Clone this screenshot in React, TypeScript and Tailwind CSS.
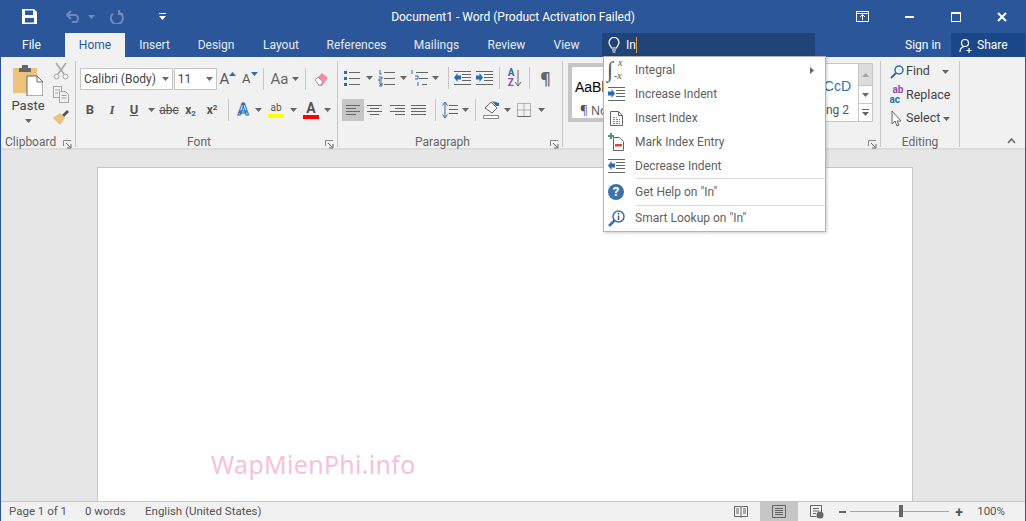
import React from 'react';

const Caret = ({ color = '#666', className = '' }: { color?: string; className?: string }) => (
  <svg width="7" height="4" viewBox="0 0 7 4" className={className}><path d="M0 0h7L3.500 4z" fill={color} /></svg>
);

// fixed width slot with a centered child, ribbon buttons are all like this
const Cell = ({ w, children, active }: { w: string; children?: React.ReactNode; active?: boolean }) => (
  <div className={`${w} h-[22px] shrink-0 flex items-center justify-center ${active ? 'bg-[#c6c6c6]' : ''}`}>{children}</div>
);

const Sep = ({ className = '' }: { className?: string }) => <div className={`w-px h-[22px] shrink-0 bg-[#c6c6c6] ${className}`} />;

const Launcher = () => (
  <svg width="9" height="9" viewBox="0 0 9 9" fill="none">
    <path d="M.5 6V.5H8" stroke="#8a8a8a" />
    <path d="M3 3l4.500 4.500M8 4v4H4" stroke="#666" />
  </svg>
);

const Lines = ({ d }: { d: string }) => (
  <svg width="18" height="16" viewBox="0 0 18 16" fill="none"><path d={d} stroke="#666" /></svg>
);

const Bullets = () => (
  <svg width="18" height="16" viewBox="0 0 18 16" fill="none">
    <path d="M6 2.500h11M6 8.500h11M6 14.500h11" stroke="#666" />
    <path d="M1 1h3v3H1zM1 7h3v3H1zM1 13h3v3H1z" fill="#2b6cb0" />
  </svg>
);

const Numbered = () => (
  <svg width="18" height="18" viewBox="0 0 18 18" fill="none">
    <path d="M6 3.500h11M6 9.500h11M6 15.500h11" stroke="#666" />
    <path d="M2 1v4M1.500 5h2M1 8h3v2H1v2h3M1 14h3v3H1M2 15.500h2" stroke="#2b6cb0" />
  </svg>
);

const Multi = () => (
  <svg width="18" height="18" viewBox="0 0 18 18" fill="none">
    <path d="M5 3.500h12M8 9.500h9M11 15.500h5" stroke="#666" />
    <path d="M1 1v4M4 7h3v3H4M7 13v4" stroke="#2b6cb0" />
  </svg>
);

const Indent = ({ out }: { out?: boolean }) => (
  <svg width="17" height="14" viewBox="0 0 17 14" fill="none">
    <path d="M0 .5h17M8 3.500h9M8 6.500h9M8 9.500h9M0 13.500h17" stroke="#666" />
    {out
      ? <path d="M7 4.500v4H3.500V11L0 6.500 3.500 2v2.500z" fill="#2b6cb0" />
      : <path d="M0 4.500v4h3.500V11L7 6.500 3.500 2v2.500z" fill="#2b6cb0" />}
  </svg>
);

const Group = ({ w, label, launcher, children, leftLabel }: { w: string; label?: string; launcher?: boolean; children: React.ReactNode; leftLabel?: boolean }) => (
  <div className={`${w} shrink-0 h-[86px] flex flex-col border-r border-[#c6c6c6]`}>
    <div className="flex-1 min-h-0">{children}</div>
    <div className={`h-[11px] flex items-center relative text-[12px] text-[#666] ${leftLabel ? 'pl-1' : 'justify-center'} ${launcher && !leftLabel ? 'pr-[15px]' : ''}`}>
      {label}
      {launcher && <span className="absolute right-[3px] top-[4px] flex"><Launcher /></span>}
    </div>
  </div>
);

const ClipboardGroup = () => (
  <Group w="w-[75px]" label="Clipboard" launcher leftLabel>
    <div className="flex">
      <div className="w-[52px] flex flex-col items-center pt-[3px] pl-[2px]">
        <svg width="30" height="32" viewBox="0 0 30 32">
          <path d="M0 4h24v25H0z" fill="#edc27c" />
          <path d="M6 4h12v4H6zM9 1h6v3H9z" fill="#666" />
          <path d="M14 12h10l6 6v14H14z" fill="#fff" stroke="#666" />
          <path d="M24 12v6h6" fill="none" stroke="#666" />
        </svg>
        <span className="text-[13px] text-[#444] mt-[1px] leading-[18px]">Paste</span>
        <Caret className="mt-[4px]" />
      </div>
      <div className="w-[16px] flex flex-col items-center gap-[6px] pt-[1px]">
        <svg width="16" height="18" viewBox="0 0 16 18" fill="none" stroke="#a6a6a6">
          <path d="M3 1l8 11M13 1L5 12" strokeWidth="1.500" />
          <circle cx="3.500" cy="14.500" r="2.500" /><circle cx="12.500" cy="14.500" r="2.500" />
        </svg>
        <svg width="16" height="17" viewBox="0 0 16 17" fill="#f1f1f1" stroke="#a6a6a6">
          <path d="M.5.500h8v11h-8z" /><path d="M6.500 5.500h6l3 3v8h-9z" /><path d="M8.500 9.500h5M8.500 12h5M2 4h5M2 7h3" />
        </svg>
        <svg width="16" height="16" viewBox="0 0 16 16">
          <path d="M9 6l5-5 2 2-5 5z" fill="#555" />
          <path d="M7 4l5 5-5 7-7-7z" fill="#edc27c" />
        </svg>
      </div>
    </div>
  </Group>
);

const FontBox = ({ w, text }: { w: string; text: string }) => (
  <div className={`${w} shrink-0 h-[22px] bg-white border border-[#c6c6c6] flex items-center justify-between pl-[3px] pr-[3px] text-[12px] text-[#444]`}>
    <span>{text}</span><Caret />
  </div>
);

const FontGroup = () => (
  <Group w="w-[262px]" label="Font" launcher>
    <div className="pt-[7px] pl-[4px]">
      <div className="flex items-center h-[22px]">
        <FontBox w="w-[93px]" text="Calibri (Body)" />
        <div className="w-px" />
        <FontBox w="w-[43px]" text="11" />
        <Cell w="w-[22px]"><span className="text-[15px] text-[#555]">A</span><Caret color="#2b6cb0" className="mb-[10px] rotate-180" /></Cell>
        <Cell w="w-[22px]"><span className="text-[13px] text-[#555]">A</span><Caret color="#2b6cb0" className="mb-[10px]" /></Cell>
        <div className="w-[3px]" />
        <Sep />
        <div className="w-[4px]" />
        <Cell w="w-[24px]"><span className="text-[15px] text-[#666]">Aa</span></Cell>
        <Cell w="w-[8px]"><Caret /></Cell>
        <div className="w-[7px]" />
        <Sep />
        <Cell w="w-[31px]">
          <svg width="16" height="16" viewBox="0 0 16 16"><path d="M1 9l7-7 6 5-6 8H5z" fill="#ef8ea0" /><path d="M1 9l3-3 5 5-2 3H5z" fill="#fff" stroke="#888" strokeWidth=".7" /></svg>
        </Cell>
      </div>
      <div className="flex items-center h-[22px] mt-[9px] -ml-[1px]">
        <Cell w="w-[22px]"><b className="text-[13px] text-[#555]">B</b></Cell>
        <Cell w="w-[22px]"><i className="text-[13px] text-[#555] font-['Liberation_Serif',serif] font-bold">I</i></Cell>
        <Cell w="w-[22px]"><b className="text-[13px] text-[#555] underline">U</b></Cell>
        <Cell w="w-[12px]"><Caret /></Cell>
        <div className="w-px" />
        <Cell w="w-[22px]"><span className="text-[12px] text-[#555] line-through">abc</span></Cell>
        <Cell w="w-[21px]"><b className="text-[12px] text-[#555]">x<sub className="text-[8px] text-[#2b6cb0]">2</sub></b></Cell>
        <Cell w="w-[22px]"><b className="text-[12px] text-[#555]">x<sup className="text-[8px] text-[#555]">2</sup></b></Cell>
        <div className="w-[5px]" />
        <Sep />
        <div className="w-[3px]" />
        <Cell w="w-[22px]"><span className="text-[16px] font-bold text-white [-webkit-text-stroke:1px_#2b6cb0]">A</span></Cell>
        <Cell w="w-[8px]"><Caret /></Cell>
        <div className="w-[3px]" />
        <Cell w="w-[22px]">
          <div className="flex flex-col items-center">
            <span className="text-[10px] leading-[12px] text-[#555]">ab</span>
            <div className="w-[16px] h-[4px] bg-[#ffff00]" />
          </div>
        </Cell>
        <Cell w="w-[12px]"><Caret /></Cell>
        <div className="w-px" />
        <Cell w="w-[22px]">
          <div className="flex flex-col items-center">
            <span className="text-[14px] leading-[13px] font-bold text-[#555]">A</span>
            <div className="w-[16px] h-[4px] bg-[#ff0000]" />
          </div>
        </Cell>
        <Cell w="w-[10px]"><Caret /></Cell>
      </div>
    </div>
  </Group>
);

const ParagraphGroup = () => (
  <Group w="w-[225px]" label="Paragraph" launcher>
    <div className="pt-[6px] pl-[3px]">
      <div className="flex items-center h-[22px]">
        <Cell w="w-[22px]"><Bullets /></Cell>
        <Cell w="w-[12px]"><Caret /></Cell>
        <div className="w-px" />
        <Cell w="w-[22px]"><Numbered /></Cell>
        <Cell w="w-[11px]"><Caret /></Cell>
        <Cell w="w-[21px]"><Multi /></Cell>
        <Cell w="w-[10px]"><Caret /></Cell>
        <div className="w-[8px]" />
        <Sep />
        <div className="w-[2px]" />
        <Cell w="w-[22px]"><Indent out /></Cell>
        <Cell w="w-[23px]"><Indent /></Cell>
        <div className="w-[3px]" />
        <Sep />
        <div className="w-[4px]" />
        <Cell w="w-[22px]">
          <div className="flex items-center">
            <div className="flex flex-col text-[10px] leading-[10px] font-bold">
              <span className="text-[#2b6cb0]">A</span><span className="text-[#8e4db5]">Z</span>
            </div>
            <svg width="8" height="17" viewBox="0 0 8 17" fill="none"><path d="M4 0v16M1 12l3 4 3-4" stroke="#666" /></svg>
          </div>
        </Cell>
        <div className="w-[3px]" />
        <Sep />
        <Cell w="w-[31px]"><span className="text-[16px] font-bold text-[#666] font-['Noto_Sans',sans-serif]">¶</span></Cell>
      </div>
      <div className="flex items-center h-[23px] mt-[9px] pl-px">
        <Cell w="w-[22px]" active><Lines d="M2 3.500h14M2 6.500h10M2 9.500h14M2 12.500h10" /></Cell>
        <Cell w="w-[22px]"><Lines d="M1 3.500h15M4 6.500h9M1 9.500h15M4 12.500h9" /></Cell>
        <Cell w="w-[22px]"><Lines d="M2 3.500h15M7 6.500h10M2 9.500h15M7 12.500h10" /></Cell>
        <Cell w="w-[22px]"><Lines d="M1 3.500h15M1 6.500h15M1 9.500h15M1 12.500h15" /></Cell>
        <div className="w-[5px]" />
        <Sep />
        <div className="w-[3px]" />
        <Cell w="w-[22px]">
          <svg width="16" height="18" viewBox="0 0 16 18" fill="none">
            <path d="M7 4.500h9M7 8.500h9M7 12.500h9" stroke="#666" />
            <path d="M3 2v14M.5 4.500L3 1l2.500 3.500M.5 13.500L3 17l2.500-3.500" stroke="#2b6cb0" />
          </svg>
        </Cell>
        <Cell w="w-[9px]"><Caret /></Cell>
        <div className="w-[5px]" />
        <Sep />
        <div className="w-[4px]" />
        <Cell w="w-[22px]">
          <svg width="17" height="19" viewBox="0 0 17 19" fill="none">
            <path d="M2 8l6-6 6 6-5 5z" fill="#fff" stroke="#666" />
            <path d="M9 1l4 5h3V3z" fill="#2b6cb0" />
            <path d="M.5 15.500h15v3H.5z" fill="#fff" stroke="#888" />
          </svg>
        </Cell>
        <Cell w="w-[10px]"><Caret /></Cell>
        <div className="w-px" />
        <Cell w="w-[22px]">
          <svg width="14" height="14" viewBox="0 0 14 14" fill="none">
            <path d="M.5.500h13v13H.5zM7 .5v13M.5 7h13" stroke="#777" strokeDasharray="1 1" />
            <path d="M.5 13.500h13" stroke="#666" />
          </svg>
        </Cell>
        <Cell w="w-[12px]"><Caret /></Cell>
      </div>
    </div>
  </Group>
);

const StylesGroup = () => (
  <Group w="w-[318px]" launcher>
    <div className="pt-[2px] pl-[5px]">
      <div className="w-[305px] h-[59px] flex border border-[#c6c6c6] bg-white">
        <div className="w-[60px] shrink-0 border-[4px] border-[#c6c6c6] -m-px pl-[3px] text-black">
          <div className="text-[14px] leading-[20px] mt-[10px] font-['Liberation_Sans',sans-serif]">AaBb</div>
          <div className="text-[12px] text-[#555] mt-[5px] pl-[5px] font-['Noto_Sans',sans-serif]">¶ No</div>
        </div>
        <div className="flex-1 flex flex-col items-end pr-[7px] overflow-hidden">
          <div className="text-[14px] leading-[20px] mt-[12px] text-[#2e74b5] whitespace-nowrap font-['Liberation_Sans',sans-serif]">bCcD</div>
          <div className="text-[12px] text-[#555] mt-[5px] whitespace-nowrap pr-[2px]">Heading 2</div>
        </div>
        <div className="w-[14px] shrink-0 flex flex-col border-l border-[#c6c6c6]">
          <div className="h-[21px] bg-[#dcdcdc] flex items-center justify-center"><Caret color="#a6a6a6" className="rotate-180" /></div>
          <div className="h-[19px] border-y border-[#c6c6c6] flex items-center justify-center"><Caret /></div>
          <div className="flex-1 flex flex-col items-center justify-center gap-[2px]">
            <div className="w-[7px] h-px bg-[#666]" /><Caret />
          </div>
        </div>
      </div>
    </div>
  </Group>
);

const EditRow = ({ icon, text, caret }: { icon: React.ReactNode; text: string; caret?: string }) => (
  <div className="h-[23.500px] flex items-center text-[12.500px] text-[#444]">
    <div className="w-[19px] flex justify-center">{icon}</div>
    <span>{text}</span>
    {caret && <Caret className={caret} />}
  </div>
);

const EditingGroup = () => (
  <Group w="w-[79px]" label="Editing">
    <div className="pl-[6px] -mt-[1px]">
      <EditRow
        text="Find"
        caret="ml-[12px]"
        icon={<svg width="14" height="14" viewBox="0 0 14 14" fill="none"><circle cx="9" cy="5" r="4" stroke="#2b6cb0" strokeWidth="1.500" /><path d="M6 8l-5 5" stroke="#2b6cb0" strokeWidth="2" /></svg>}
      />
      <EditRow
        text="Replace"
        icon={<div className="flex flex-col text-[10px] leading-[10px] font-bold"><span className="text-[#8e4db5] pl-[3px]">ab</span><span className="text-[#2b6cb0]">ac</span></div>}
      />
      <EditRow
        text="Select"
        caret="ml-[3px]"
        icon={<svg width="11" height="17" viewBox="0 0 11 17" fill="#fff" stroke="#666"><path d="M1 1v13l3-3 2 5 2-1-2-4h4z" /></svg>}
      />
    </div>
  </Group>
);

const MenuIcon = ({ children }: { children: React.ReactNode }) => <div className="w-[31px] flex justify-center pl-[1px] pr-[8px] shrink-0">{children}</div>;

const MenuRow = ({ icon, text, h = 'h-[24px]', arrow }: { icon: React.ReactNode; text: string; h?: string; arrow?: boolean }) => (
  <div className={`${h} flex items-center text-[12px] text-[#5f5f5f]`}>
    <MenuIcon>{icon}</MenuIcon>
    <span>{text}</span>
    {arrow && (
      <svg width="4" height="7" viewBox="0 0 4 7" className="ml-auto mr-[11px]"><path d="M0 0l4 3.500L0 7z" fill="#666" /></svg>
    )}
  </div>
);

const TellMeMenu = () => (
  <div className="absolute left-[602px] top-[56px] w-[223px] h-[176px] bg-white border border-[#b4b4b4] shadow-[1px_1px_3px_rgba(0,0,0,0.2)] pt-[1px]">
    <MenuRow
      text="Integral"
      arrow
      icon={
        <div className="relative w-[16px] h-[20px] text-[#555] font-['Liberation_Serif',serif] italic">
          <span className="absolute left-[-1px] top-[-1px] text-[22px] leading-[22px]">∫</span>
          <span className="absolute left-[10px] top-[-2px] text-[10px] leading-[10px]">x</span>
          <span className="absolute left-[6px] top-[11px] text-[10px] leading-[10px]">-x</span>
        </div>
      }
    />
    <MenuRow text="Increase Indent" icon={<Indent />} />
    <MenuRow
      text="Insert Index"
      icon={
        <svg width="13" height="15" viewBox="0 0 13 15" fill="none" stroke="#666"><path d="M.5.500h8l4 4v10H.5zM8.500.500v4h4" /><path d="M3 6.500h4M3 8.500h7M3 10.500h7M3 12.500h7" strokeDasharray="2 1" stroke="#888" /></svg>
      }
    />
    <MenuRow
      text="Mark Index Entry"
      icon={
        <svg width="16" height="18" viewBox="0 0 16 18" fill="none">
          <path d="M5.500 4.500h6l4 4v9h-10z" stroke="#666" />
          <path d="M2 0h2v2h2v2H4v2H2V4H0V2h2z" fill="#4a9a6c" />
          <path d="M7 11h7v2.500H7z" fill="#d0503c" />
        </svg>
      }
    />
    <MenuRow text="Decrease Indent" icon={<Indent out />} />
    <div className="h-px ml-[32px] bg-[#dcdcdc]" />
    <MenuRow
      text={'Get Help on "In"'}
      h="h-[25.500px]"
      icon={
        <div className="w-[16px] h-[16px] rounded-full bg-[#3d73a8] text-white text-[13px] font-bold leading-[16px] text-center">?</div>
      }
    />
    <div className="h-px ml-[32px] bg-[#dcdcdc]" />
    <MenuRow
      text={'Smart Lookup on "In"'}
      h="h-[25px]"
      icon={
        <svg width="17" height="17" viewBox="0 0 17 17" fill="none">
          <circle cx="10.500" cy="6.500" r="5.500" stroke="#3d73a8" strokeWidth="1.500" />
          <path d="M6.500 10.500L1 16" stroke="#3d73a8" strokeWidth="2.500" />
          <path d="M10.500 3v1.500M10.500 5.500V10" stroke="#555" strokeWidth="1.500" />
        </svg>
      }
    />
  </div>
);

const tabs = [
  ['Insert', 'w-[57px]'],
  ['Design', 'w-[66px]'],
  ['Layout', 'w-[64px]'],
  ['References', 'w-[87px]'],
  ['Mailings', 'w-[73px]'],
  ['Review', 'w-[67px]'],
  ['View', 'w-[53px]'],
];

const TitleBar = () => (
  <div className="h-[33px] shrink-0 grid grid-cols-[1fr_auto_1fr] items-center text-white">
    <div className="flex items-center pl-[21px]">
      <svg width="15" height="15" viewBox="0 0 15 15">
        <path fillRule="evenodd" d="M0 0h12l3 3v12H0zM3 1.500V6h8V1.500zM3 9v4.500h9V9z" fill="#fff" />
      </svg>
      <svg width="15" height="13" viewBox="0 0 15 13" fill="none" className="ml-[29px]">
        <path d="M1 5h9a4 4 0 010 7H6M5 1L1 5l4 4" stroke="#6c8bbb" strokeWidth="2" />
      </svg>
      <Caret color="#6c8bbb" className="ml-[7px]" />
      <svg width="14" height="14" viewBox="0 0 14 14" fill="none" className="ml-[15px]">
        <path d="M9 2.500a6 6 0 11-6 1M9 0v4h4" stroke="#6c8bbb" strokeWidth="2" />
      </svg>
      <div className="ml-[35px] flex flex-col items-center gap-[2px]">
        <div className="w-[7px] h-px bg-white" /><Caret color="#fff" />
      </div>
    </div>
    <div className="text-[12px]">Document1 - Word (Product Activation Failed)</div>
    <div className="flex items-center justify-end">
      <svg width="13" height="11" viewBox="0 0 13 11" fill="none" className="mr-[36px]">
        <path d="M.5.500h12v10H.5zM.5 2.500h12" stroke="#fff" /><path d="M6.500 9V4M4 6l2.500-2.500L9 6" stroke="#fff" />
      </svg>
      <div className="w-[9px] h-[2px] bg-white mr-[37px] mt-[1px]" />
      <div className="w-[10px] h-[10px] border border-t-2 border-white mr-[36px]" />
      <svg width="10" height="10" viewBox="0 0 10 10" className="mr-[18px]"><path d="M1 1l8 8M9 1L1 9" stroke="#fff" strokeWidth="2" /></svg>
    </div>
  </div>
);

const TabRow = () => (
  <div className="h-[24px] shrink-0 flex text-[12px] text-white">
    <div className="w-[64px] flex items-center pl-[21px]">File</div>
    <div className="w-[60px] bg-[#f1f1f1] text-[#2b579a] flex items-center justify-center">Home</div>
    <div className="w-[1px]" />
    {tabs.map(([name, w]) => (
      <div key={name} className={`${w} flex items-center justify-center text-[#e6ebf3]`}>{name}</div>
    ))}
    <div className="w-[213px] ml-[9px] bg-[#214478] flex items-center pl-[6px]">
      <svg width="12" height="16" viewBox="0 0 12 16" fill="none">
        <path d="M3.500 11C3 9 1 8 1 5.500a5 5 0 0110 0C11 8 9 9 8.500 11zM4 13h4M4.500 15h3" stroke="#fff" strokeWidth="1.200" />
      </svg>
      <span className="ml-[6px]">In</span>
      <div className="w-px h-[16px] bg-[#e39a3c]" />
    </div>
    <div className="flex-1 flex items-center justify-end pr-[10px]">Sign in</div>
    <div className="w-[74px] bg-[#19478a] flex items-center pl-[8px]">
      <svg width="14" height="15" viewBox="0 0 14 15" fill="none" stroke="#fff" strokeWidth="1.200">
        <circle cx="6" cy="5" r="3.500" /><path d="M1 14c0-3 2-5 4-5.500M10 10v5M7.500 12.500h5" />
      </svg>
      <span className="ml-[4px]">Share</span>
    </div>
  </div>
);

const Ribbon = () => (
  <div className="h-[93px] shrink-0 bg-[#f1f1f1] border-b-2 border-[#dcdcdc] pt-[4px] flex">
    <ClipboardGroup />
    <FontGroup />
    <ParagraphGroup />
    <StylesGroup />
    <EditingGroup />
    <div className="flex-1 flex items-end justify-end pr-[9px] pb-[4px]">
      <svg width="9" height="6" viewBox="0 0 9 6" fill="none"><path d="M1 5l3.500-4L8 5" stroke="#666" strokeWidth="1.500" /></svg>
    </div>
  </div>
);

const StatusBar = () => (
  <div className="h-[20px] shrink-0 bg-[#f1f1f1] border-t border-[#c6c6c6] flex items-center text-[11.500px] text-[#555]">
    <span className="ml-[8px] w-[76px]">Page 1 of 1</span>
    <span className="w-[60px]">0 words</span>
    <span>English (United States)</span>
    <div className="ml-auto flex items-center h-full">
      <svg width="14" height="12" viewBox="0 0 14 12" fill="none" stroke="#666"><path d="M.5.500h6l.5 1 .5-1h6v10h-6l-.5 1-.5-1h-6zM7 1.500v9M2 3h3M2 5h3M2 7h3M9 3h3M9 5h3M9 7h3" /></svg>
      <div className="w-[38px] h-full bg-[#c6c6c6] ml-[12px] flex items-center justify-center">
        <svg width="14" height="13" viewBox="0 0 14 13" fill="none" stroke="#666"><path d="M.5.500h13v12H.5zM3 3.500h8M3 5.500h8M3 7.500h8M3 9.500h8" /></svg>
      </div>
      <svg width="14" height="14" viewBox="0 0 14 14" fill="none" className="ml-[12px]">
        <path d="M.5.500h11v7M.5.500v11h6M3 3.500h6M3 6h6M3 8.500h3" stroke="#666" /><circle cx="10" cy="10" r="3.500" fill="#666" />
      </svg>
      <div className="w-[7px] h-[2px] bg-[#666] ml-[15px]" />
      <div className="relative w-[99px] h-px bg-[#a6a6a6] ml-[4px]">
        <div className="absolute left-[49px] top-[-6px] w-[4px] h-[12px] bg-[#666]" />
      </div>
      <span className="text-[14px] font-bold leading-none ml-[4px] w-[12px] text-center">+</span>
      <span className="ml-[12px] mr-[20px]">100%</span>
    </div>
  </div>
);

export default function App() {
  return (
    <div className="relative w-[1026px] h-[521px] overflow-hidden flex flex-col border-x border-[#2b579a] bg-[#2b579a] font-['Roboto',sans-serif]">
      <TitleBar />
      <TabRow />
      <Ribbon />
      <div className="flex-1 min-h-0 bg-[#e6e6e6] pt-[17px] pr-[16px] flex justify-center overflow-hidden">
        <div className="relative w-[816px] h-[400px] bg-white border border-[#c6c6c6]">
          <div className="absolute left-[113px] top-[278px] text-[25px] tracking-[0.3px] text-[#f7bfd8] font-['Noto_Sans',sans-serif]">WapMienPhi.info</div>
        </div>
      </div>
      <StatusBar />
      <TellMeMenu />
    </div>
  );
}
